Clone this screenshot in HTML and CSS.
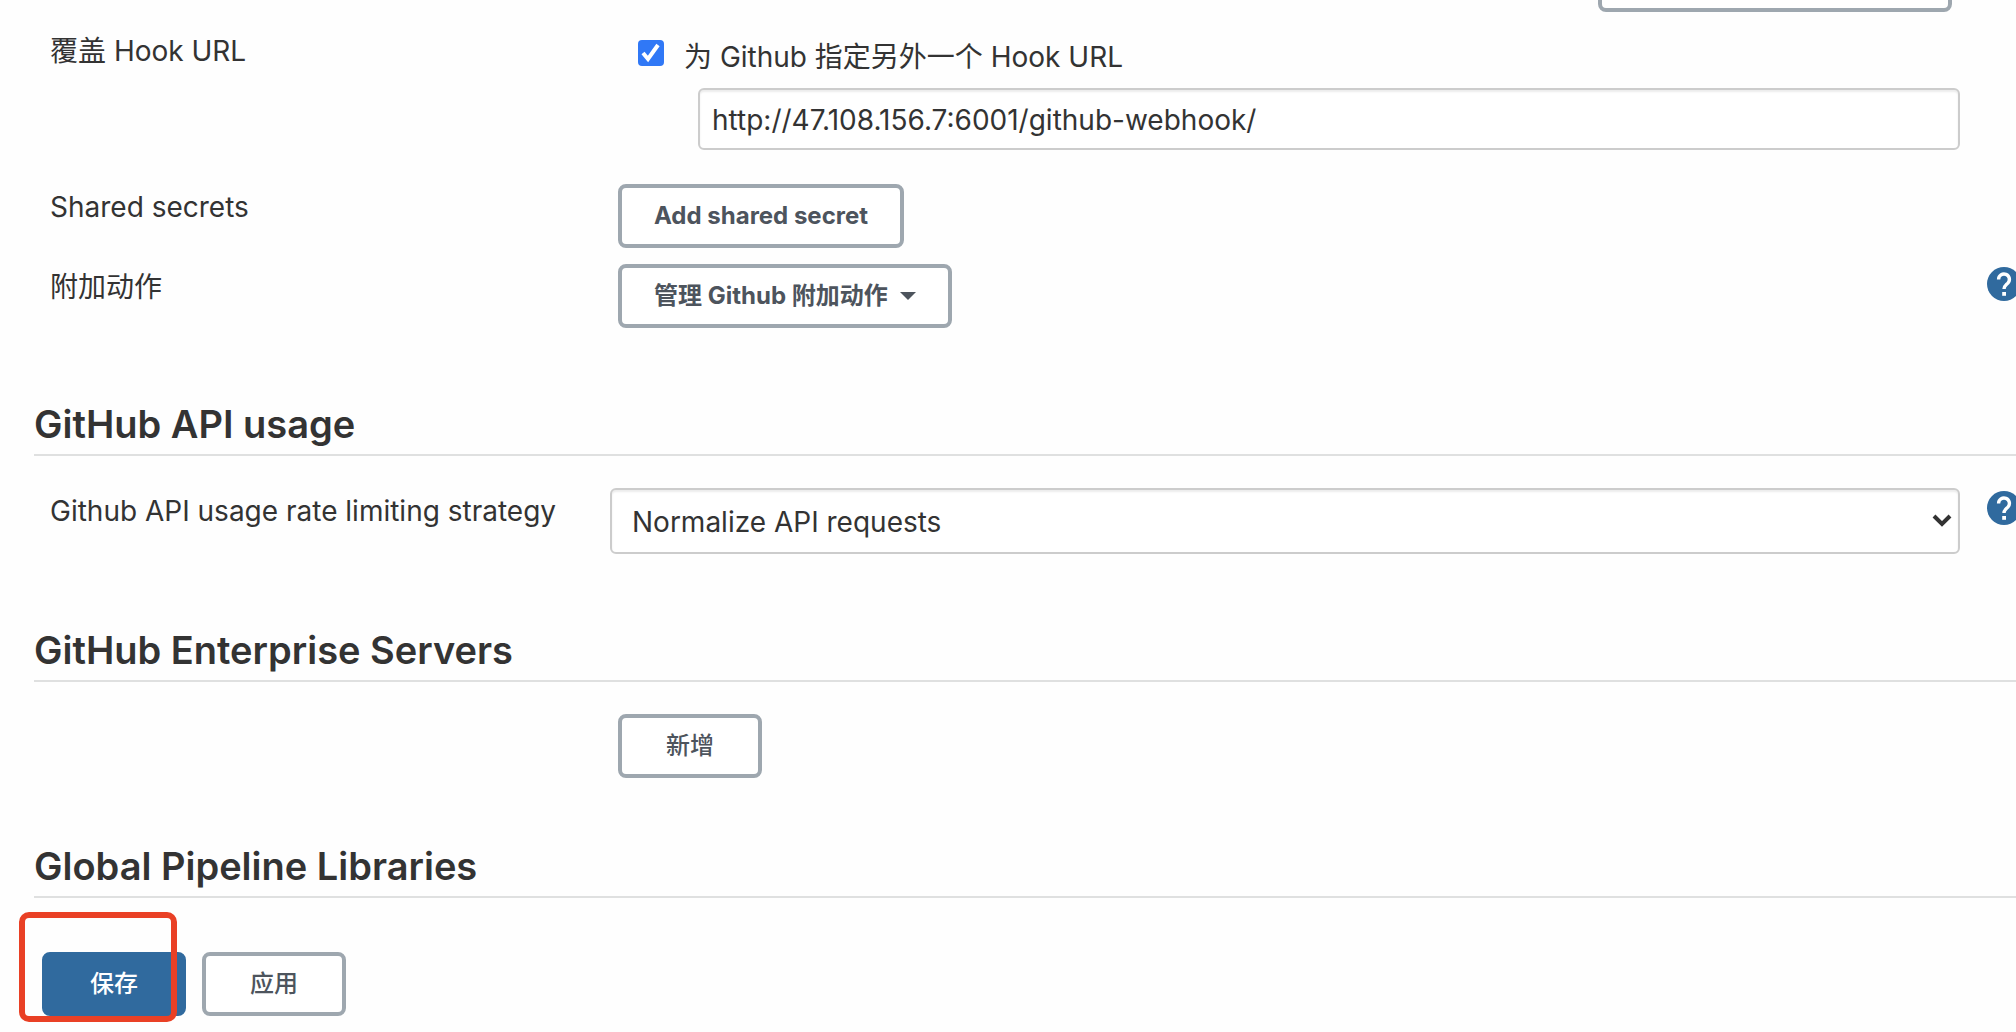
FILE: index.html
```html
<!DOCTYPE html>
<html lang="zh-CN">
<head>
<meta charset="utf-8">
<meta name="viewport" content="width=device-width, initial-scale=1">
<title>系统配置</title>
<link rel="stylesheet" href="styles.css">
</head>
<body>
<form class="config">
  <div class="previous">
    <button type="button" class="btn btn-advanced" aria-label="高级"></button>
  </div>

  <div class="row row-hook">
    <label class="label" for="hook-url">覆盖 Hook URL</label>
    <div class="control">
      <label class="check">
        <input type="checkbox" class="checkbox" checked>
        <span>为 Github 指定另外一个 Hook URL</span>
      </label>
      <input id="hook-url" class="field field-nested" type="text" value="http://47.108.156.7:6001/github-webhook/">
    </div>
  </div>

  <div class="row row-secrets">
    <span class="label">Shared secrets</span>
    <div class="control control-button">
      <button type="button" class="btn">Add shared secret</button>
    </div>
  </div>

  <div class="row row-actions">
    <span class="label">附加动作</span>
    <div class="control control-button">
      <button type="button" class="btn">管理 Github 附加动作<span class="caret"></span></button>
    </div>
    <a class="help" href="#" aria-label="帮助">
      <svg width="34" height="34" viewBox="0 0 34 34"><circle cx="17" cy="17" r="17" fill="#306a9e"/><path d="M11.6 12.4a5.4 5.4 0 1 1 9.3 3.7c-1.9 2-3.900 2.900-3.900 6" fill="none" stroke="#fff" stroke-width="3.400"/><path d="M15.200 25h3.800v3.800h-3.800z" fill="#fff"/></svg>
    </a>
  </div>

  <section class="section">
    <h2 class="heading">GitHub API usage</h2>
    <div class="row">
      <label class="label" for="strategy">Github API usage rate limiting strategy</label>
      <div class="control">
        <select id="strategy" class="select">
          <option>Normalize API requests</option>
        </select>
      </div>
      <a class="help" href="#" aria-label="帮助">
        <svg width="34" height="34" viewBox="0 0 34 34"><circle cx="17" cy="17" r="17" fill="#306a9e"/><path d="M11.6 12.4a5.4 5.4 0 1 1 9.3 3.7c-1.9 2-3.900 2.900-3.900 6" fill="none" stroke="#fff" stroke-width="3.400"/><path d="M15.200 25h3.800v3.800h-3.800z" fill="#fff"/></svg>
      </a>
    </div>
  </section>

  <section class="section">
    <h2 class="heading">GitHub Enterprise Servers</h2>
    <div class="row">
      <div class="control control-button">
        <button type="button" class="btn btn-short">新增</button>
      </div>
    </div>
  </section>

  <section class="section section-last">
    <h2 class="heading">Global Pipeline Libraries</h2>
  </section>

  <div class="actions">
    <div class="marked">
      <button type="submit" class="btn btn-short btn-primary">保存</button>
      <span class="marker"></span>
    </div>
    <button type="button" class="btn btn-short">应用</button>
  </div>
</form>
</body>
</html>
```
FILE: styles.css
```css
* {
  box-sizing: border-box;
}

body {
  margin: 0;
  overflow-x: hidden;
  background: #fefefe;
  color: #333;
  font: 28px/38px Inter, "Noto Sans CJK SC", sans-serif;
}

.config {
  margin: -52px -5px 0 34px;
  padding-bottom: 16px;
}

.previous {
  display: flex;
  justify-content: flex-end;
  padding-right: 69px;
}

.row {
  display: grid;
  grid-template-columns: 560px 1fr 34px;
  column-gap: 16px;
  align-items: start;
}

.row-hook {
  margin-top: 16px;
}

.row-secrets {
  margin-top: 34px;
}

.row-actions {
  margin-top: 16px;
}

.label {
  padding: 4px 0 0 16px;
  white-space: nowrap;
}

.control {
  grid-column: 2;
  margin-right: 11px;
}

.control-button {
  display: flex;
  padding-left: 8px;
}

.help {
  display: flex;
  margin-top: 3px;
}

.check {
  display: flex;
  align-items: flex-start;
  gap: 20px;
  padding: 10px 0 12px 28px;
}

.checkbox {
  appearance: none;
  width: 26px;
  height: 26px;
  margin: 2px 0 0;
  border-radius: 4px;
  background: #fff;
  border: 2px solid #ccc;
}

.checkbox:checked {
  border: 0;
  background: #3078f6 url("data:image/svg+xml,%3Csvg xmlns='http://www.w3.org/2000/svg' viewBox='0 0 26 26'%3E%3Cpath d='M5 13l5 6L20 5' fill='none' stroke='white' stroke-width='4'/%3E%3C/svg%3E") center / 26px no-repeat;
}

.field,
.select {
  display: block;
  width: 100%;
  border: 2px solid #ccc;
  border-radius: 6px;
  background: #fff;
  box-shadow: inset 0 2px 2px rgba(0, 0, 0, 0.08);
  color: #333;
  font: inherit;
}

.field {
  height: 62px;
  padding: 2px 12px 0;
}

.field-nested {
  width: calc(100% - 88px);
  margin-left: 88px;
}

.select {
  appearance: none;
  height: 66px;
  padding: 2px 48px 0 20px;
  background: #fff url("data:image/svg+xml,%3Csvg xmlns='http://www.w3.org/2000/svg' viewBox='0 0 20 14'%3E%3Cpath d='M2 2l8 8 8-8' fill='none' stroke='%23333' stroke-width='4'/%3E%3C/svg%3E") right 6px center / 20px 14px no-repeat;
}

.btn {
  display: inline-flex;
  align-items: center;
  justify-content: center;
  height: 64px;
  padding: 0 32px;
  border: 4px solid #9ea7af;
  border-radius: 8px;
  background: #fff;
  color: #4d545d;
  font: 700 24px/32px Inter, "Noto Sans CJK SC", sans-serif;
  white-space: nowrap;
}

.btn-short {
  width: 144px;
  font-weight: 500;
}

.btn-advanced {
  width: 354px;
}

.btn-primary {
  border-color: #306a9e;
  background: #306a9e;
  color: #fff;
}

.caret {
  margin-left: 12px;
  border: 8px solid transparent;
  border-top-color: #4d545d;
  border-bottom: 0;
}

.section {
  margin-top: 72px;
}

.row-actions + .section {
  margin-top: 72px;
}

.section-last {
  margin-top: 64px;
}

.heading {
  margin: 0 0 32px;
  padding-bottom: 6px;
  border-bottom: 2px solid #dfe0e0;
  font-size: 38px;
  line-height: 48px;
  font-weight: 600;
}

.section-last .heading {
  margin-bottom: 0;
}

.actions {
  display: flex;
  gap: 16px;
  margin-top: 54px;
  padding-left: 8px;
}

.marked {
  position: relative;
  display: flex;
}

.marker {
  position: absolute;
  inset: -40px 9px -6px -23px;
  border: 6px solid #e94025;
  border-radius: 10px;
  pointer-events: none;
}
```
